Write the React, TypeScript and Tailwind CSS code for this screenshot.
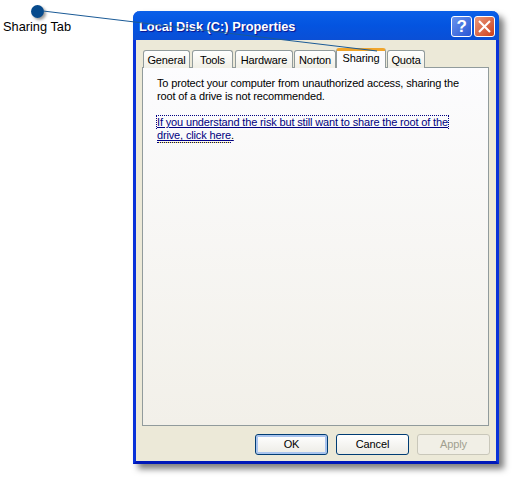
const tabs = [
  { label: "General", w: "w-[47px]", gap: "mr-[2px]" },
  { label: "Tools", w: "w-[41px]", gap: "mr-[2px]" },
  { label: "Hardware", w: "w-[58px]", gap: "mr-[1px]" },
  { label: "Norton", w: "w-[42px]", gap: "" },
];

function CloseIcon() {
  return (
    <svg viewBox="0 0 20 20" className="w-[19px] h-[19px]">
      <path d="M5 5 L15 15 M15 5 L5 15" stroke="white" strokeWidth="2.2" strokeLinecap="square" fill="none" />
    </svg>
  );
}

export default function App() {
  return (
    <div className="relative w-[518px] h-[484px] bg-white flex overflow-hidden font-['Liberation_Sans',Arial,sans-serif] text-[11px] tracking-[-0.15px] text-black">
      <div className="w-[133px] shrink-0 pt-[5px] flex flex-col items-start">
        <div className="ml-[31px] w-[13px] h-[13px] rounded-full bg-[#064a8c] shadow-[2px_2px_3px_rgba(0,0,0,0.4)]" />
        <div className="ml-[3px] mt-[1px] leading-[16px] text-[12.8px] tracking-normal">Sharing Tab</div>
      </div>

      <div className="mt-[11px] w-[366px] h-[453px] flex flex-col rounded-t-[7px] border-x-[3px] border-b-[3px] border-[#0831d9] border-b-[#0018b8] shadow-[5px_5px_6px_rgba(0,0,0,0.5)] bg-[#ece9d8]">
        <div className="-mx-[3px] h-[29px] shrink-0 rounded-t-[7px] bg-gradient-to-b from-[#0a5fe8] via-[#0454e0] to-[#0a4fd6] flex items-center pl-[6px] pr-[4px] pt-[2px] gap-[2px]">
          <div className="flex-1 pt-[1px] text-white font-bold text-[12.8px] tracking-normal [text-shadow:1px_1px_1px_#0f1089]">
            Local Disk (C:) Properties
          </div>
          <div className="w-[21px] h-[21px] rounded-[3px] border border-white bg-gradient-to-br from-[#6b94ee] to-[#2a55d4] text-white font-bold text-[17px] leading-[19px] text-center">
            ?
          </div>
          <div className="w-[21px] h-[21px] rounded-[3px] border border-white bg-gradient-to-br from-[#e8977a] to-[#cc3c12] flex items-center justify-center overflow-hidden">
            <CloseIcon />
          </div>
        </div>

        <div className="flex-1 flex flex-col px-[6px] pt-[8px]">
          <div className="flex items-end pl-[1px] h-[20px] relative z-10 -mb-px">
            {tabs.map((t) => (
              <div
                key={t.label}
                className={`${t.w} ${t.gap} h-[18px] rounded-t-[3px] border border-b-0 border-[#919b9c] bg-gradient-to-b from-white to-[#f0efe6] text-center leading-[18px]`}
              >
                {t.label}
              </div>
            ))}
            <div className="w-[50px] h-[20px] rounded-t-[3px] border-x border-[#919b9c] border-t-[3px] border-t-[#f0a52c] bg-[#fcfcfe] text-center leading-[14px]">
              Sharing
            </div>
            <div className="w-[38px] ml-[1px] h-[18px] rounded-t-[3px] border border-b-0 border-[#919b9c] bg-gradient-to-b from-white to-[#f0efe6] text-center leading-[18px]">
              Quota
            </div>
          </div>

          <div className="h-[359px] w-[347px] border border-[#919b9c] bg-gradient-to-b from-[#fcfcfe] to-[#f2f0e9] px-[14px] pt-[9px] leading-[13px]">
            <p className="w-[310px]">
              To protect your computer from unauthorized access, sharing the root of a drive is not recommended.
            </p>
            <div className="mt-[12px] text-[#000080] underline">
              <div className="w-fit border-t border-x border-dotted border-[#000080] -ml-px">
                If you understand the risk but still want to share the root of the
              </div>
              <div className="flex">
                <span className="border-b border-dotted border-[#000080] bg-[linear-gradient(to_top,#f5e642_1px,transparent_1px)] bg-origin-border">
                  drive, click here
                </span>
                <span className="text-black no-underline">.</span>
              </div>
            </div>
          </div>

          <div className="flex justify-end gap-[8px] pt-[8px] w-[348px]">
            <button className="w-[73px] h-[21px] rounded-[3px] border border-[#003c74] bg-gradient-to-b from-white to-[#ecebe5] shadow-[inset_0_0_0_2px_#a9c4ee]">
              OK
            </button>
            <button className="w-[73px] h-[21px] rounded-[3px] border border-[#003c74] bg-gradient-to-b from-white to-[#ecebe5]">
              Cancel
            </button>
            <button className="w-[73px] h-[21px] rounded-[3px] border border-[#c9c7ba] bg-[#f1efe6] text-[#a19f8f]">
              Apply
            </button>
          </div>
        </div>
      </div>

      <svg className="absolute inset-0 z-20 pointer-events-none" width="518" height="484">
        <path d="M43 11 L377 51" stroke="#1a5a96" strokeWidth="1" fill="none" />
      </svg>
    </div>
  );
}
